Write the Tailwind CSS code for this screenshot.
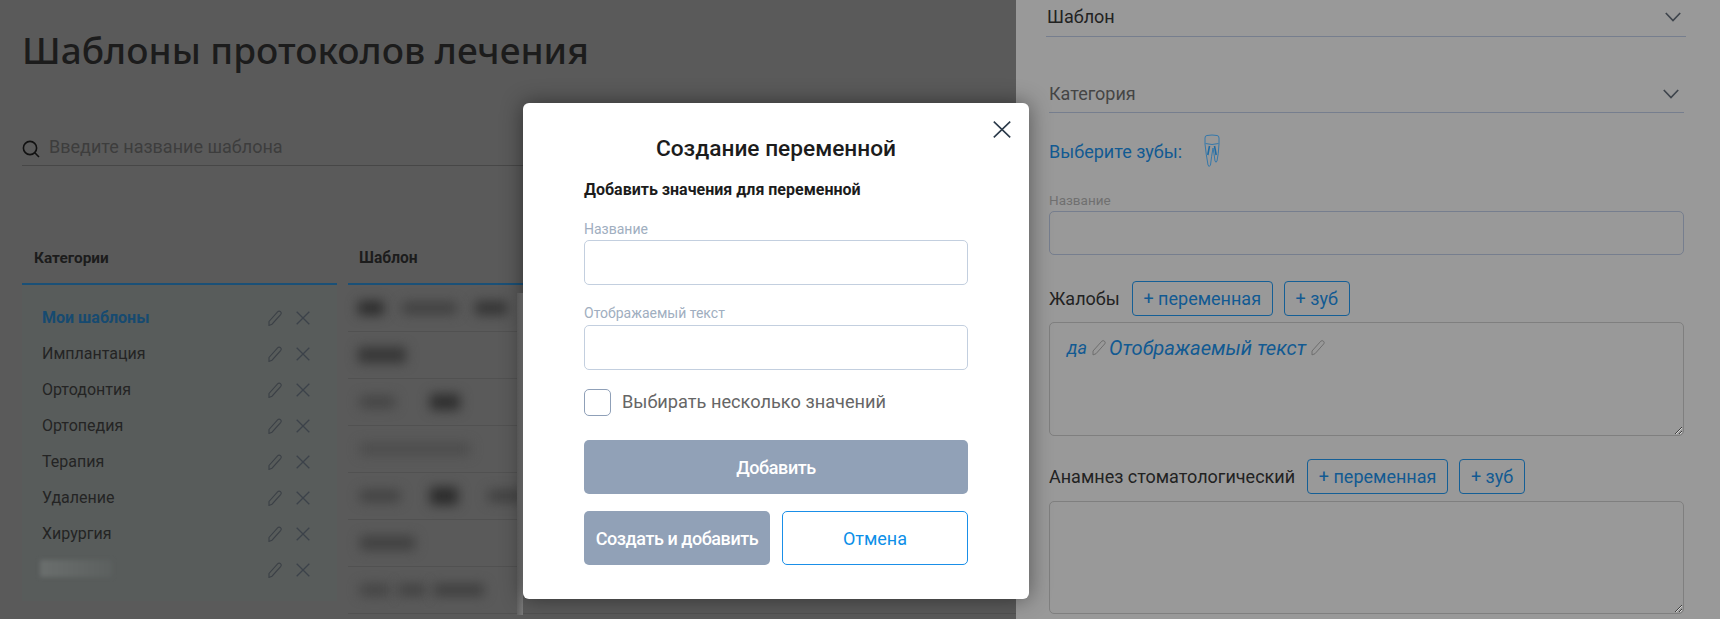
<!DOCTYPE html>
<html lang="ru">
<head>
    <meta charset="UTF-8">
    <title>Шаблоны протоколов лечения</title>
    <script src="https://cdn.jsdelivr.net/npm/@tailwindcss/browser@4"></script>
</head>
<body class="bg-[#5a5a5a] font-['Roboto',sans-serif] h-[619px] overflow-hidden relative">
    <!-- page behind the overlay -->
    <main class="w-[1016px] pl-[22px]">
        <h1 class="pt-[25px] text-[37px] leading-[50px] font-medium font-['Noto_Sans',sans-serif] text-[#1c1c1c] whitespace-nowrap">Шаблоны протоколов лечения</h1>
        <div class="mt-[55px] h-[36px] border-b border-[#474747] flex items-center gap-[9px] pb-[2px]">
            <svg class="w-[18px] h-[18px] mt-[4px]" viewBox="0 0 18 18" fill="none" stroke="#111" stroke-width="1.6"><circle cx="8" cy="8" r="6.6"/><path d="M12.8 12.8 17 17"/></svg>
            <span class="text-[18px] text-[#3d3d3d]">Введите название шаблона</span>
        </div>
        <div class="mt-[65px] flex gap-[11px]">
            <section class="w-[315px]">
                <div class="h-[54px] pl-[12px] pt-[3px] border-b-2 border-[#1a5077] flex items-center text-[15.4px] font-bold text-[#1c1c1c]">Категории</div>
                <ul class="bg-[#585c5b] h-[316px] pt-[15px] pl-[20px] pr-[27px] text-[16px] text-[#242424]">
                    <li class="h-[36px] flex items-center justify-between">
                        <span class="font-bold text-[16px] text-[#164a70]">Мои шаблоны</span>
                        <span class="flex items-center gap-[13px]">
                            <svg class="w-[15px] h-[16px]" viewBox="0 0 15 16" fill="none" stroke="#3b4046" stroke-width="1.1"><path d="M1 11.5 9.8 1.7a2 2 0 0 1 3 2.6L4 14.2l-3 1.2z"/></svg>
                            <svg class="w-[14px] h-[14px]" viewBox="0 0 14 14" fill="none" stroke="#3c424a" stroke-width="1.3"><path d="M.7.7l12.6 12.6M13.3.7.7 13.3"/></svg>
                        </span>
                    </li>
                    <li class="h-[36px] flex items-center justify-between">
                        <span>Имплантация</span>
                        <span class="flex items-center gap-[13px]">
                            <svg class="w-[15px] h-[16px]" viewBox="0 0 15 16" fill="none" stroke="#3b4046" stroke-width="1.1"><path d="M1 11.5 9.8 1.7a2 2 0 0 1 3 2.6L4 14.2l-3 1.2z"/></svg>
                            <svg class="w-[14px] h-[14px]" viewBox="0 0 14 14" fill="none" stroke="#3c424a" stroke-width="1.3"><path d="M.7.7l12.6 12.6M13.3.7.7 13.3"/></svg>
                        </span>
                    </li>
                    <li class="h-[36px] flex items-center justify-between">
                        <span>Ортодонтия</span>
                        <span class="flex items-center gap-[13px]">
                            <svg class="w-[15px] h-[16px]" viewBox="0 0 15 16" fill="none" stroke="#3b4046" stroke-width="1.1"><path d="M1 11.5 9.8 1.7a2 2 0 0 1 3 2.6L4 14.2l-3 1.2z"/></svg>
                            <svg class="w-[14px] h-[14px]" viewBox="0 0 14 14" fill="none" stroke="#3c424a" stroke-width="1.3"><path d="M.7.7l12.6 12.6M13.3.7.7 13.3"/></svg>
                        </span>
                    </li>
                    <li class="h-[36px] flex items-center justify-between">
                        <span>Ортопедия</span>
                        <span class="flex items-center gap-[13px]">
                            <svg class="w-[15px] h-[16px]" viewBox="0 0 15 16" fill="none" stroke="#3b4046" stroke-width="1.1"><path d="M1 11.5 9.8 1.7a2 2 0 0 1 3 2.6L4 14.2l-3 1.2z"/></svg>
                            <svg class="w-[14px] h-[14px]" viewBox="0 0 14 14" fill="none" stroke="#3c424a" stroke-width="1.3"><path d="M.7.7l12.6 12.6M13.3.7.7 13.3"/></svg>
                        </span>
                    </li>
                    <li class="h-[36px] flex items-center justify-between">
                        <span>Терапия</span>
                        <span class="flex items-center gap-[13px]">
                            <svg class="w-[15px] h-[16px]" viewBox="0 0 15 16" fill="none" stroke="#3b4046" stroke-width="1.1"><path d="M1 11.5 9.8 1.7a2 2 0 0 1 3 2.6L4 14.2l-3 1.2z"/></svg>
                            <svg class="w-[14px] h-[14px]" viewBox="0 0 14 14" fill="none" stroke="#3c424a" stroke-width="1.3"><path d="M.7.7l12.6 12.6M13.3.7.7 13.3"/></svg>
                        </span>
                    </li>
                    <li class="h-[36px] flex items-center justify-between">
                        <span>Удаление</span>
                        <span class="flex items-center gap-[13px]">
                            <svg class="w-[15px] h-[16px]" viewBox="0 0 15 16" fill="none" stroke="#3b4046" stroke-width="1.1"><path d="M1 11.5 9.8 1.7a2 2 0 0 1 3 2.6L4 14.2l-3 1.2z"/></svg>
                            <svg class="w-[14px] h-[14px]" viewBox="0 0 14 14" fill="none" stroke="#3c424a" stroke-width="1.3"><path d="M.7.7l12.6 12.6M13.3.7.7 13.3"/></svg>
                        </span>
                    </li>
                    <li class="h-[36px] flex items-center justify-between">
                        <span>Хирургия</span>
                        <span class="flex items-center gap-[13px]">
                            <svg class="w-[15px] h-[16px]" viewBox="0 0 15 16" fill="none" stroke="#3b4046" stroke-width="1.1"><path d="M1 11.5 9.8 1.7a2 2 0 0 1 3 2.6L4 14.2l-3 1.2z"/></svg>
                            <svg class="w-[14px] h-[14px]" viewBox="0 0 14 14" fill="none" stroke="#3c424a" stroke-width="1.3"><path d="M.7.7l12.6 12.6M13.3.7.7 13.3"/></svg>
                        </span>
                    </li>
                    <li class="h-[36px] flex items-center justify-between">
                        <span class="w-[72px] h-[17px] -ml-[2px] -mt-[4px] bg-gradient-to-r from-[#6a6e6d] to-[#5c605f] blur-[2px]"></span>
                        <span class="flex items-center gap-[13px]">
                            <svg class="w-[15px] h-[16px]" viewBox="0 0 15 16" fill="none" stroke="#3b4046" stroke-width="1.1"><path d="M1 11.5 9.8 1.7a2 2 0 0 1 3 2.6L4 14.2l-3 1.2z"/></svg>
                            <svg class="w-[14px] h-[14px]" viewBox="0 0 14 14" fill="none" stroke="#3c424a" stroke-width="1.3"><path d="M.7.7l12.6 12.6M13.3.7.7 13.3"/></svg>
                        </span>
                    </li>
                </ul>
            </section>
            <section class="flex-1 relative">
                <div class="h-[54px] pl-[11px] pt-[3px] border-b-2 border-[#1a5077] flex items-center text-[15.6px] font-bold text-[#1c1c1c]">Шаблон</div>
                <div class="divide-y divide-[#515151]">
                    <div class="h-[47px] flex items-center gap-[18px] pl-[10px]"><i class="w-[26px] h-[14px] bg-[#2c2c2c] blur-[6px]"></i><i class="w-[55px] h-[12px] bg-[#404040] blur-[6px]"></i><i class="w-[32px] h-[14px] bg-[#343434] blur-[6px]"></i></div>
                    <div class="h-[47px] flex items-center pl-[10px]"><i class="w-[48px] h-[16px] bg-[#363636] blur-[6px]"></i></div>
                    <div class="h-[47px] flex items-center gap-[35px] pl-[12px]"><i class="w-[35px] h-[12px] bg-[#444] blur-[6px]"></i><i class="w-[30px] h-[16px] bg-[#2e2e2e] blur-[6px]"></i></div>
                    <div class="h-[47px] flex items-center pl-[12px]"><i class="w-[110px] h-[12px] bg-[#4c4c4c] blur-[6px]"></i></div>
                    <div class="h-[47px] flex items-center gap-[30px] pl-[12px]"><i class="w-[40px] h-[12px] bg-[#424242] blur-[6px]"></i><i class="w-[28px] h-[18px] bg-[#2c2c2c] blur-[6px]"></i><i class="w-[35px] h-[12px] bg-[#404040] blur-[6px]"></i></div>
                    <div class="h-[47px] flex items-center pl-[12px]"><i class="w-[55px] h-[14px] bg-[#404040] blur-[6px]"></i></div>
                    <div class="h-[47px] flex items-center gap-[8px] pl-[12px] border-b border-[#515151]"><i class="w-[30px] h-[12px] bg-[#444] blur-[6px]"></i><i class="w-[28px] h-[12px] bg-[#424242] blur-[6px]"></i><i class="w-[50px] h-[12px] bg-[#3e3e3e] blur-[6px]"></i></div>
                </div>
                <div class="absolute left-[169px] top-[62px] w-[6px] h-[322px] bg-gradient-to-r from-[#626262] to-[#7c7c7c]"></div>
            </section>
        </div>
    </main>

    <!-- side drawer -->
    <aside class="absolute left-[1016px] top-0 bottom-0 right-0 bg-[#999999] overflow-hidden text-[18px] text-[#222]">
        <div class="ml-[30px] w-[640px] h-[37px] border-b border-[#767e8e] flex items-center justify-between pl-[1px] pr-[5px] pb-[3px]">
            <span>Шаблон</span>
            <svg class="w-[16px] h-[10px]" viewBox="0 0 16 10" fill="none" stroke="#3f454d" stroke-width="1.7"><path d="M.8 1 8 8.6 15.2 1"/></svg>
        </div>
        <div class="ml-[33px] w-[635px] mt-[38px] h-[38px] border-b border-[#767e8e] flex items-center justify-between pr-[5px]">
            <span class="text-[#454545]">Категория</span>
            <svg class="w-[16px] h-[10px]" viewBox="0 0 16 10" fill="none" stroke="#3f454d" stroke-width="1.7"><path d="M.8 1 8 8.6 15.2 1"/></svg>
        </div>
        <div class="ml-[33px] mt-[21px] h-[34px] flex items-center gap-[22px]">
            <span class="text-[#125a92] pt-[1px]">Выберите зубы:</span>
            <svg class="w-[16px] h-[34px]" viewBox="0 0 16 34" fill="none" stroke="#3478ab" stroke-width="1"><path d="M1 4Q1 1.5 3 1.5 8 .5 13 1.5 15 1.5 15 4L15 10Q14.5 20 13 27 12 29.5 11 27 10 19 9 14 7.5 22 6.5 31 5 34 4 31 2 20 1 10z"/><path d="M1.5 9.5Q8 11.5 14.5 9.5"/><path d="M5.5 12 3.8 21M10.5 12l1.7 9" stroke="#1f6aa3" stroke-width="1.6"/></svg>
        </div>
        <div class="ml-[33px] w-[635px] mt-[24px]">
            <label class="block text-[13.5px] leading-[16px] text-[#707070]">Название</label>
            <input type="text" class="block w-full mt-[3px] h-[44px] rounded-[5px] border border-[#767e8e] bg-transparent">
        </div>
        <div class="ml-[33px] mt-[26px] h-[35px] flex items-center">
            <span>Жалобы</span>
            <button class="ml-[12px] w-[141px] h-[35px] rounded-[4px] border border-[#155f96] text-[#125a92]">+ переменная</button>
            <button class="ml-[11px] w-[66px] h-[35px] rounded-[4px] border border-[#155f96] text-[#125a92]">+ зуб</button>
        </div>
        <div class="ml-[33px] w-[635px] mt-[6px] h-[114px] rounded-[5px] border border-[#7f7f7f] pl-[17px] pt-[11px] italic text-[#125a92] flex items-start resize-y overflow-auto">
            <span class="leading-[28px]">да</span>
            <svg class="w-[15px] h-[17px] ml-[5px] mr-[2px] mt-[5px]" viewBox="0 0 15 16" fill="none" stroke="#6e6e6e" stroke-width="1"><path d="M1 11.5 9.8 1.7a2 2 0 0 1 3 2.6L4 14.2l-3 1.2z"/></svg>
            <span class="text-[20.2px] leading-[28px]">Отображаемый текст</span>
            <svg class="w-[15px] h-[17px] ml-[5px] mt-[5px]" viewBox="0 0 15 16" fill="none" stroke="#6e6e6e" stroke-width="1"><path d="M1 11.5 9.8 1.7a2 2 0 0 1 3 2.6L4 14.2l-3 1.2z"/></svg>
        </div>
        <div class="ml-[33px] mt-[23px] h-[35px] flex items-center">
            <span>Анамнез стоматологический</span>
            <button class="ml-[12px] w-[141px] h-[35px] rounded-[4px] border border-[#155f96] text-[#125a92]">+ переменная</button>
            <button class="ml-[11px] w-[66px] h-[35px] rounded-[4px] border border-[#155f96] text-[#125a92]">+ зуб</button>
        </div>
        <textarea class="block ml-[33px] w-[635px] mt-[7px] h-[113px] rounded-[5px] border border-[#7f7f7f] bg-transparent"></textarea>
    </aside>

    <!-- modal -->
    <div class="absolute left-[523px] top-[103px] w-[506px] h-[496px] bg-white rounded-[6px] shadow-[0_0_22px_rgba(0,0,0,0.45)] px-[61px] pt-[32px]">
        <svg class="absolute left-[470px] top-[18px] w-[18px] h-[17px]" viewBox="0 0 18 17" fill="none" stroke="#2b3a4a" stroke-width="1.6"><path d="M.8.6l16.4 15.8M17.2.6.8 16.4"/></svg>
        <h2 class="text-center text-[22.7px] leading-[28px] font-medium text-[#1c1c1c]">Создание переменной</h2>
        <p class="mt-[17px] text-[16px] leading-[20px] font-bold text-[#1c1c1c]">Добавить значения для переменной</p>
        <label class="block mt-[20px] text-[14px] leading-[18px] text-[#a0aec0]">Название</label>
        <input type="text" class="block w-full mt-[2px] h-[45px] rounded-[5px] border border-[#c3cfdf]">
        <label class="block mt-[19px] text-[14px] leading-[18px] text-[#a0aec0]">Отображаемый текст</label>
        <input type="text" class="block w-full mt-[3px] h-[45px] rounded-[5px] border border-[#c3cfdf]">
        <div class="mt-[19px] flex items-center gap-[11px]">
            <span class="w-[27px] h-[27px] rounded-[5px] border border-[#8fa0b8]"></span>
            <span class="text-[18.2px] text-[#666] -mt-[1px]">Выбирать несколько значений</span>
        </div>
        <button class="block mt-[24px] w-full h-[54px] rounded-[5px] bg-[#91a1b7] text-white text-[18px] font-medium tracking-[-0.4px]">Добавить</button>
        <div class="mt-[17px] flex gap-[12px]">
            <button class="w-[186px] h-[54px] rounded-[5px] bg-[#91a1b7] text-white text-[18px] font-medium tracking-[-0.45px] whitespace-nowrap">Создать и добавить</button>
            <button class="w-[186px] h-[54px] rounded-[5px] border border-[#1a8fe8] text-[#0d8fe8] text-[18px]">Отмена</button>
        </div>
    </div>
</body>
</html>
